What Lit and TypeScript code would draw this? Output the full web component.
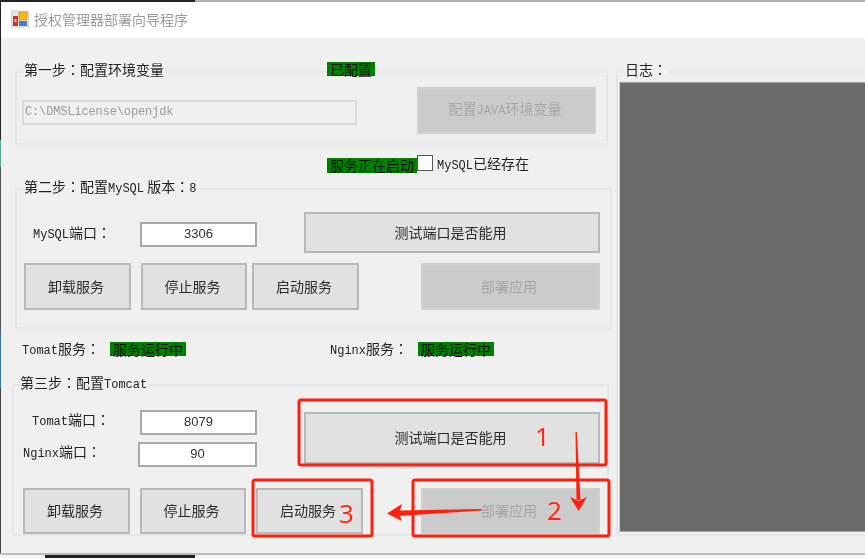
import { LitElement, html, css } from "lit";
import { customElement } from "lit/decorators.js";

const colon = html`<span class="c">：</span>`;

@customElement("app-root")
export class AppRoot extends LitElement {
  static styles = css`
    :host { display: block; position: relative; width: 865px; height: 558px; overflow: hidden; background: #f0f0f0;
      font-family: "Noto Sans CJK SC", sans-serif; font-size: 14px; line-height: 16px; color: #222; filter: blur(0.35px); }
    .l { font-family: "Liberation Mono", "Noto Sans CJK SC", monospace; font-size: 12px; }
    .c { font-family: "Noto Sans CJK TC", sans-serif; }
    .top { display: flex; height: 2px; background: #b0b0b0; }
    .top i { display: block; width: 195px; background: #222; }
    .frame { display: flex; height: 551px; }
    .edge { width: 1px; background: linear-gradient(#222 0 25%, #5a9 25% 30%, #555 30% 60%, #37a 60% 70%, #444 70%); }
    .win { flex: 1; min-width: 0; display: flex; flex-direction: column; }
    .title { height: 36px; background: #fff; display: flex; align-items: center; gap: 5px; padding: 0 0 3px 10px; box-sizing: border-box; color: #9c9c9c; }
    .title svg { display: block; }
    .body { flex: 1; display: flex; background: #f0f0f0; min-height: 0; }
    .left { width: 615px; flex: none; }
    .group { position: relative; box-sizing: border-box; border: 2px solid #e6e6e6; }
    .legend { position: absolute; top: -12px; background: #f0f0f0; white-space: nowrap; padding: 0 2px 0 0; }
    .ok { background: #008000; color: #111; white-space: nowrap; line-height: 14px; text-align: center; }
    .g1 { margin: 33px 0 0 14px; width: 593px; height: 74px; display: flex; justify-content: space-between; padding: 14px 10px 0 5px; }
    .g1 .legend { left: 7px; }
    .g1 .ok { position: absolute; left: 310px; top: -11px; width: 48px; height: 14px; }
    .path { box-sizing: border-box; width: 335px; height: 25px; margin-top: 13px; border: 2px solid #dadada; color: #9a9a9a; padding: 2px 0 0 1px; line-height: 17px; letter-spacing: -0.14px; }
    .btn { box-sizing: border-box; display: flex; align-items: center; justify-content: center; background: #e1e1e1; border: 2px solid #b8b8b8; color: #2a2a2a; padding: 0 3px 2px 0; }
    .btn.off { background: #cbcbcb; border-color: #d0d0d0; color: #a6a6a6; }
    .java { width: 179px; height: 47px; }
    .chk { margin: 10px 0 0 326px; height: 18px; display: flex; }
    .chk .ok { width: 90px; height: 15px; margin-top: 3px; line-height: 15px; }
    .box { width: 14px; height: 14px; background: #fff; border: 1px solid #555; }
    .chk span.t { margin: 0 0 0 4px; }
    .g2 { margin: 15px 0 0 14px; width: 597px; height: 141px; padding: 22px 0 0 7px; }
    .g2 .legend { left: 7px; }
    .r1 { display: flex; height: 41px; }
    .lab { white-space: nowrap; }
    .num { box-sizing: border-box; background: #fff; border: 2px solid #a8a8a8; text-align: center; font-family: "Liberation Sans", sans-serif; font-size: 13px; line-height: 19px; color: #333; height: 25px; }
    .g2 .lab { width: 116px; padding: 12px 0 0 9px; box-sizing: border-box; }
    .g2 .num { width: 117px; margin-top: 10px; }
    .g2 .test { width: 296px; margin-left: 47px; }
    .r2 { display: flex; margin-top: 10px; height: 47px; }
    .r2 .btn { width: 107px; }
    .r2 .b2 { margin-left: 10px; width: 106px; }
    .r2 .b3 { margin-left: 5px; }
    .r2 .b4 { margin-left: 62px; width: 179px; }
    .svc { display: flex; margin: 13px 0 0 21px; height: 14px; }
    .svc .lab { width: 88px; line-height: 13px; }
    .svc .ok { width: 76px; }
    .svc .n { margin-left: 144px; }
    .g3 { margin: 28px 0 0 11px; width: 597px; height: 152px; padding: 24px 0 0 9px; }
    .g3 .legend { left: 6px; }
    .ports { display: flex; height: 55px; }
    .pcol { width: 281px; display: grid; grid-template-rows: 25px 25px; row-gap: 7px; }
    .pr { display: flex; justify-content: space-between; align-items: center; }
    .pr .lab { margin-bottom: 4px; }
    .pr .num { width: 117px; margin-right: 47px; }
    .pr.w .num { width: 119px; }
    .pr .lab.t { margin-left: 9px; }
    .g3 .test { width: 296px; height: 52px; margin-top: 2px; }
    .r3 { display: flex; margin-top: 23px; height: 46px; }
    .r3 .btn { width: 107px; }
    .r3 .b2 { margin-left: 10px; width: 106px; }
    .r3 .b3 { margin-left: 10px; }
    .r3 .b4 { margin-left: 58px; width: 179px; }
    .log { flex: 1; margin-top: 33px; height: 465px; box-sizing: border-box; border: 2px solid #e6e6e6; border-right: 0; position: relative; padding: 9px 0 0 1px; }
    .log .legend { left: 7px; }
    .panel { height: 450px; background: #6b6b6b; border-top: 1px solid #a0a0a0; border-left: 1px solid #d0d0d0; border-bottom: 1px solid #a8a8a8; box-sizing: border-box; }
    .bot { height: 5px; display: flex; flex-direction: column; }
    .bot .s { height: 2px; background: #bcbcbc; }
    .bot .d { flex: 1; display: flex; background: #f4f4f4; }
    .bot .d i { display: block; margin-left: 45px; width: 150px; background: #222; }
    .over { position: absolute; inset: 0; pointer-events: none; }
    .mk { position: absolute; font-family: "Open Sans", sans-serif; font-size: 26px; line-height: 26px; color: #ff2412; }
  `;

  render() {
    return html`
      <div class="top"><i></i></div>
      <div class="frame">
        <div class="edge"></div>
        <div class="win">
          <div class="title">
            <svg width="18" height="18" viewBox="0 0 18 18">
              <rect x="0.5" y="1" width="17" height="16" fill="#e4e4e4" stroke="#cfcfcf"/>
              <rect x="8" y="2" width="8" height="8" fill="#f2b81c" stroke="#c98f10" stroke-width=".6"/>
              <rect x="2" y="6" width="5" height="10" fill="#c8322a"/>
              <rect x="3.5" y="9" width="2" height="3" fill="#f0d0c8"/>
              <rect x="8" y="11" width="8" height="5" fill="#3f7fd0"/>
            </svg>
            <span>授权管理器部署向导程序</span>
          </div>
          <div class="body">
            <div class="left">
              <div class="group g1">
                <div class="legend">第一步${colon}配置环境变量</div>
                <div class="ok">已配置</div>
                <div class="path l">C:\\DMSLicense\\openjdk</div>
                <div class="btn off java"><span>配置<span class="l">JAVA</span>环境变量</span></div>
              </div>
              <div class="chk">
                <div class="ok">服务正在启动</div>
                <div class="box"></div>
                <span class="t"><span class="l">MySQL</span>已经存在</span>
              </div>
              <div class="group g2">
                <div class="legend">第二步${colon}配置<span class="l">MySQL</span> 版本${colon}<span class="l">8</span></div>
                <div class="r1">
                  <div class="lab"><span class="l">MySQL</span>端口${colon}</div>
                  <div class="num">3306</div>
                  <div class="btn test">测试端口是否能用</div>
                </div>
                <div class="r2">
                  <div class="btn">卸载服务</div>
                  <div class="btn b2">停止服务</div>
                  <div class="btn b3">启动服务</div>
                  <div class="btn off b4">部署应用</div>
                </div>
              </div>
              <div class="svc">
                <div class="lab"><span class="l">Tomat</span>服务${colon}</div>
                <div class="ok">服务运行中</div>
                <div class="lab n"><span class="l">Nginx</span>服务${colon}</div>
                <div class="ok">服务运行中</div>
              </div>
              <div class="group g3">
                <div class="legend">第三步${colon}配置<span class="l">Tomcat</span></div>
                <div class="ports">
                  <div class="pcol">
                    <div class="pr"><div class="lab t"><span class="l">Tomat</span>端口${colon}</div><div class="num">8079</div></div>
                    <div class="pr w"><div class="lab"><span class="l">Nginx</span>端口${colon}</div><div class="num">90</div></div>
                  </div>
                  <div class="btn test">测试端口是否能用</div>
                </div>
                <div class="r3">
                  <div class="btn">卸载服务</div>
                  <div class="btn b2">停止服务</div>
                  <div class="btn b3">启动服务</div>
                  <div class="btn off b4">部署应用</div>
                </div>
              </div>
            </div>
            <div class="log">
              <div class="legend">日志${colon}</div>
              <div class="panel"></div>
            </div>
          </div>
        </div>
      </div>
      <div class="bot"><div class="s"></div><div class="d"><i></i></div></div>
      <svg class="over" width="865" height="558" viewBox="0 0 865 558">
        <g fill="none" stroke="#ff1f0f" stroke-width="3" stroke-linejoin="round">
          <rect x="299" y="400" width="307" height="65" rx="2"/>
          <rect x="413" y="480" width="196" height="56" rx="2"/>
          <rect x="253" y="480" width="119" height="56" rx="2"/>
        </g>
        <g fill="#ff1f0f">
          <polygon points="575.5,432 576.8,432 580.5,500 576.5,500"/>
          <polygon points="570,497 578.5,501 587,497 578.5,511"/>
          <polygon points="482,509 482,510.5 398,516 398,510.5"/>
          <polygon points="387,513.5 402,504 399,513.5 402,521"/>
        </g>
      </svg>
      <div class="mk" style="left:535px;top:423px">1</div>
      <div class="mk" style="left:547px;top:497px">2</div>
      <div class="mk" style="left:339px;top:500px">3</div>
    `;
  }
}
